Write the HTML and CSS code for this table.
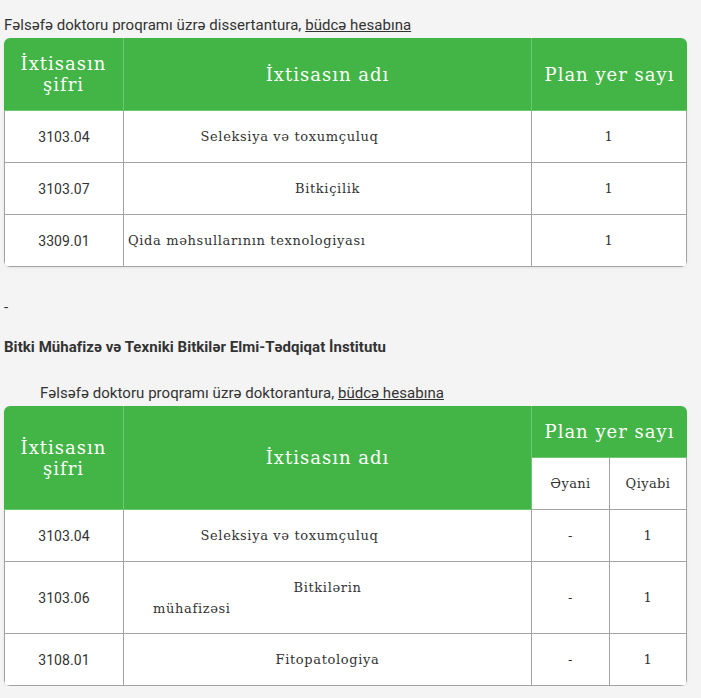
FILE: index.html
```html
<!DOCTYPE html>
<html lang="az">
<head>
<meta charset="utf-8">
<title>Plan yer sayı</title>
<link rel="stylesheet" href="styles.css">
</head>
<body>
<div class="page">
  <p class="intro">Fəlsəfə doktoru proqramı üzrə dissertantura, <a href="#">büdcə hesabına</a></p>
  <div class="tbl-wrap">
    <table class="tbl">
      <colgroup><col class="c1"><col class="c2"><col class="c3"></colgroup>
      <thead>
        <tr class="hrow"><th>İxtisasın<br>şifri</th><th>İxtisasın adı</th><th>Plan yer sayı</th></tr>
      </thead>
      <tbody>
        <tr><td class="code">3103.04</td><td class="name shift">Seleksiya və toxumçuluq</td><td class="num">1</td></tr>
        <tr><td class="code">3103.07</td><td class="name">Bitkiçilik</td><td class="num">1</td></tr>
        <tr><td class="code">3309.01</td><td class="name left">Qida məhsullarının texnologiyası</td><td class="num">1</td></tr>
      </tbody>
    </table>
  </div>

  <p class="dash">-</p>
  <p class="inst">Bitki Mühafizə və Texniki Bitkilər Elmi-Tədqiqat İnstitutu</p>
  <p class="intro indent">Fəlsəfə doktoru proqramı üzrə doktorantura, <a href="#">büdcə hesabına</a></p>

  <div class="tbl-wrap">
    <table class="tbl">
      <colgroup><col class="c1"><col class="c2"><col class="c4"><col class="c5"></colgroup>
      <thead>
        <tr class="hrow2"><th rowspan="2" class="span2">İxtisasın<br>şifri</th><th rowspan="2" class="span2">İxtisasın adı</th><th colspan="2" class="plan">Plan yer sayı</th></tr>
        <tr class="subrow"><td class="sub">Əyani</td><td class="sub">Qiyabi</td></tr>
      </thead>
      <tbody>
        <tr><td class="code">3103.04</td><td class="name shift">Seleksiya və toxumçuluq</td><td class="num">-</td><td class="num">1</td></tr>
        <tr class="tall"><td class="code">3103.06</td><td class="name"><span class="l1">Bitkilərin</span><span class="l2">mühafizəsi</span></td><td class="num">-</td><td class="num">1</td></tr>
        <tr><td class="code">3108.01</td><td class="name">Fitopatologiya</td><td class="num">-</td><td class="num">1</td></tr>
      </tbody>
    </table>
  </div>
</div>
</body>
</html>
```
FILE: styles.css
```css
html, body {
  margin: 0;
  padding: 0;
  background: #f4f4f4;
}
body {
  font-family: Roboto, "Liberation Sans", sans-serif;
  color: #333;
}
.page {
  padding: 16px 14px 0 4px;
}
.intro {
  margin: 0 0 4px 0;
  font-size: 15px;
  line-height: 18px;
  letter-spacing: 0.05px;
  color: #333;
}
.intro a {
  color: #333;
  text-decoration: underline;
}
.indent {
  padding-left: 36px;
}
.dash {
  margin: 31px 0 0 0;
  font-size: 15px;
  line-height: 18px;
}
.inst {
  margin: 22px 0 0 0;
  font-size: 15px;
  line-height: 18px;
  font-weight: 700;
  letter-spacing: 0.05px;
  color: #333;
}
.inst + .intro {
  margin-top: 28px;
}
.tbl-wrap {
  border-radius: 6px;
  overflow: hidden;
  background: #fff;
  box-shadow: 0 1px 3px rgba(0,0,0,0.08);
}
.tbl {
  width: 100%;
  border-collapse: separate;
  border-spacing: 0;
  table-layout: fixed;
}
.c1 { width: 120px; }
.c3 { width: 155px; }
.c4 { width: 78px; }
.c5 { width: 77px; }
.tbl th, .tbl td {
  box-sizing: border-box;
}
.tbl th {
  background: #43b546;
  color: #fff;
  font-family: "DejaVu Serif", "Liberation Serif", serif;
  font-weight: 400;
  font-size: 18px;
  line-height: 21px;
  letter-spacing: 1px;
  border-right: 1px solid #6cc870;
  border-bottom: 1px solid #6cc870;
  text-align: center;
  padding: 0 4px;
}
.tbl tr > th:last-child { border-right: 0; }
.hrow th { height: 73px; }
.hrow2 th.plan { height: 52px; }
.tbl td {
  border-right: 1px solid #a3a3a3;
  border-bottom: 1px solid #a3a3a3;
  text-align: center;
  height: 52px;
  padding: 0 4px;
  color: #333;
}
.tbl tbody tr > td:first-child { border-left: 1px solid #a3a3a3; }
.subrow td.sub {
  font-family: "DejaVu Serif", "Liberation Serif", serif;
  font-size: 13px;
  letter-spacing: 0.4px;
}
.code {
  font-family: Roboto, "Liberation Sans", sans-serif;
  font-size: 14px;
  letter-spacing: 0.1px;
  color: #3a3a3a;
}
.name, .num {
  font-family: "DejaVu Serif", "Liberation Serif", serif;
  font-size: 13px;
  letter-spacing: 0.65px;
}
.name.shift { padding-right: 80px; }
.name.left { text-align: left; }
.tall td { height: 72px; }
.l1, .l2 { display: block; line-height: 21px; }
.l1 { text-align: center; }
.l2 { text-align: left; padding-left: 25px; }
```
